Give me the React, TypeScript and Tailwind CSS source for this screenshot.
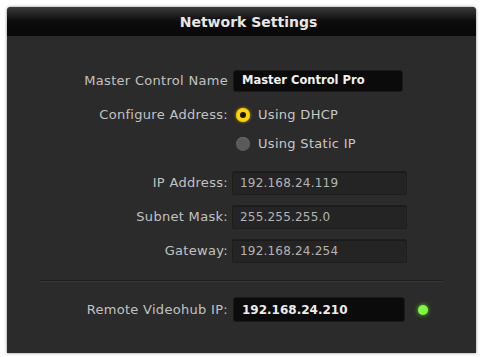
import React from "react";

const font = { fontFamily: '"DejaVu Sans", "Liberation Sans", sans-serif' };

function Label({ children }: { children: React.ReactNode }) {
  return (
    <div className="w-[226px] shrink-0 pr-[5px] text-right text-[13px] text-[#c2c2c2] tracking-[0.3px]">
      {children}
    </div>
  );
}

function DimField({ label, value, className }: { label: string; value: string; className?: string }) {
  return (
    <div className={"flex items-center " + (className ?? "")}>
      <Label>{label}</Label>
      <div className="ml-[-1px] flex h-[24px] w-[175px] items-center rounded-[2px] border border-[#1e1e1e] bg-[#242424] pl-[7px] text-[12px] tracking-[0.2px] text-[#b4b4b4] shadow-[inset_0_1px_0_#1a1a1a]">
        {value}
      </div>
    </div>
  );
}

export default function App() {
  return (
    <div className="h-[357px] w-[481px] bg-white pt-[7px] pl-[7px]" style={font}>
      <div className="flex h-[346px] w-[469px] flex-col overflow-hidden rounded-t-[4px] bg-[#2b2b2b] shadow-[0_0_3px_rgba(0,0,0,0.5)]">
        <div className="flex h-[29px] shrink-0 items-center justify-center bg-linear-to-b from-[#3c3c3c] via-[#0c0c0c] to-[#080808] pt-[1px] pl-[14px] text-[14px] font-bold text-[#e6e6e6]">
          Network Settings
        </div>

        <div className="flex flex-col pt-[34px]">
          <div className="flex items-center">
            <Label>Master Control Name</Label>
            <div className="flex h-[22px] w-[170px] items-center rounded-[3px] border border-[#1a1a1a] bg-[#0b0b0b] pl-[8px] text-[11.5px] font-bold text-[#f0f0f0]">
              Master Control Pro
            </div>
          </div>

          <div className="mt-[15px] flex h-[16px] items-center">
            <Label>Configure Address:</Label>
            <div className="flex items-center">
              <span className="ml-[3px] flex h-[14px] w-[14px] items-center justify-center rounded-full bg-[#ffd400] shadow-[0_0_3px_#c9a800]">
                <span className="h-[6px] w-[6px] rounded-full bg-[#1a1400]" />
              </span>
              <span className="ml-[8px] text-[13px] tracking-[0.3px] text-[#c8c8c8]">Using DHCP</span>
            </div>
          </div>

          <div className="mt-[13px] flex h-[16px] items-center">
            <div className="w-[226px] shrink-0" />
            <span className="ml-[3px] h-[14px] w-[14px] rounded-full bg-[#5a5a5a] shadow-[inset_0_1px_1px_#6a6a6a]" />
            <span className="ml-[8px] text-[13px] tracking-[0.3px] text-[#c8c8c8]">Using Static IP</span>
          </div>

          <DimField className="mt-[19px]" label="IP Address:" value="192.168.24.119" />
          <DimField className="mt-[10px]" label="Subnet Mask:" value="255.255.255.0" />
          <DimField className="mt-[10px]" label="Gateway:" value="192.168.24.254" />

          <div className="mx-[33px] mt-[17px] h-[2px] border-t border-b border-t-[#1f1f1f] border-b-[#363636]" />

          <div className="mt-[15px] flex items-center">
            <Label>Remote Videohub IP:</Label>
            <div className="flex h-[25px] w-[172px] items-center rounded-[3px] border border-[#1a1a1a] bg-[#0b0b0b] pl-[8px] text-[12px] font-bold text-[#ececec]">
              192.168.24.210
            </div>
            <span className="ml-[13px] h-[10px] w-[10px] rounded-full bg-[#7dfb3c] shadow-[0_0_4px_#5cd82a]" />
          </div>
        </div>
      </div>
    </div>
  );
}
